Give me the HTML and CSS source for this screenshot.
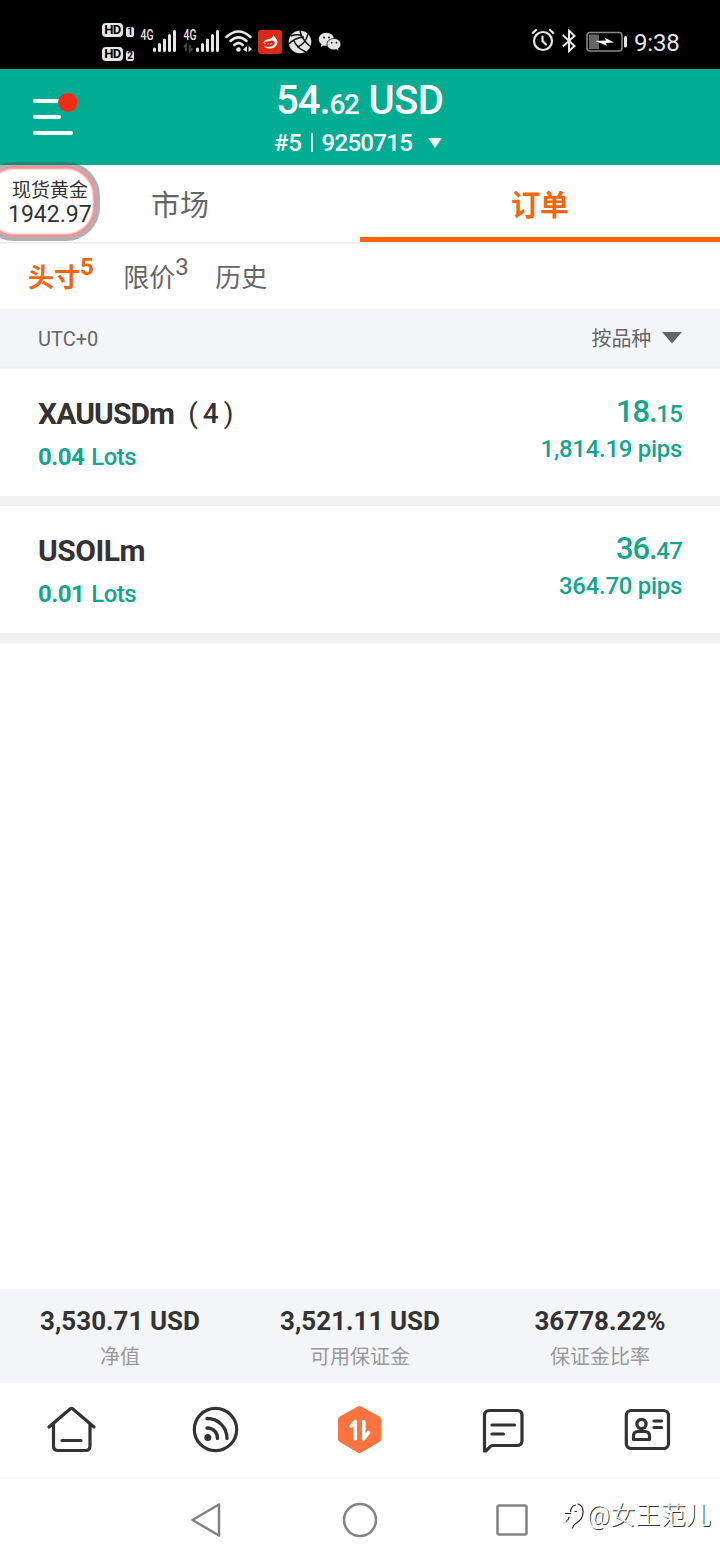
FILE: index.html
```html
<!DOCTYPE html>
<html lang="zh-CN">
<head>
<meta charset="utf-8">
<title>订单</title>
<link rel="stylesheet" href="styles.css">
</head>
<body>
<div class="screen">
  <div class="status">
    <div class="hd-group">
      <div class="hd"><span class="hd-badge">HD</span><span class="hd-num">1</span></div>
      <div class="hd"><span class="hd-badge">HD</span><span class="hd-num">2</span></div>
    </div>
    <svg class="signals" width="80" height="30" viewBox="0 0 80 30">
      <g stroke="#e6e6e6" stroke-width="3" stroke-linecap="round">
        <path d="M14.500 23.500v-1.500M19.500 23.500v-6M24.500 23.500v-10.500M29.500 23.500v-15M34.500 23.500v-19"/>
        <path d="M57.500 23.500v-1.500M62.500 23.500v-6M67.500 23.500v-10.500M72.500 23.500v-15M77.500 23.500v-19"/>
      </g>
      <path d="M44 20l2-2v6M50 18v6l2.500-2.500" fill="none" stroke="#4a4a4a" stroke-width="1.800"/>
      <text class="net" x="0.500" y="13" textLength="13" lengthAdjust="spacingAndGlyphs">4G</text>
      <text class="net" x="43.500" y="13" textLength="13" lengthAdjust="spacingAndGlyphs">4G</text>
    </svg>
    <svg class="wifi" width="28" height="26" viewBox="0 0 28 26">
      <g fill="none" stroke="#e6e6e6" stroke-width="2.500" stroke-linecap="round">
        <path d="M1.500 8Q13.500-3 25.500 8M5.500 12Q13.500 4.800 21.500 12M9.300 16Q13.500 12.300 17.700 16"/>
      </g>
      <circle cx="13.500" cy="20.500" r="2.300" fill="#e6e6e6"/>
      <path d="M18 20.500l4-3.500v6zM23.500 17v6l3.500-3z" fill="#e6e6e6"/>
    </svg>
    <svg class="app-red" width="24" height="24" viewBox="0 0 24 24">
      <rect width="24" height="24" rx="3" fill="#d92a17"/>
      <path d="M9 9.500Q15.500 8.500 15 5Q19.500 9 19.500 12.500Q18.500 18 12.500 18.500Q8 19 6 16Q10 17.800 14 16.300Q17.500 14.500 16.500 11.500Q14 10 11.500 11Q8 10.500 4.500 13.500Q6 10.500 9 9.500z" fill="#fff"/>
      <path d="M6 14l2-.8M9 14.500l2-1M12 14.500l2-1" stroke="#f3a59b" stroke-width="1"/>
    </svg>
    <svg class="ball" width="24" height="24" viewBox="0 0 24 24">
      <circle cx="12" cy="12" r="11.300" fill="#e6e6e6"/>
      <path d="M12 1Q14 10 23 17M16 7Q6 8 1 14M6 11Q9 18 18 22M9 17Q17 15 20 4M3 6Q9 3.500 14 6" fill="none" stroke="#111" stroke-width="1.400"/>
    </svg>
    <svg class="wechat" width="24" height="20" viewBox="0 0 24 20">
      <path d="M8.500.8C4 .8.800 3.700.800 7.200c0 2 1 3.700 2.700 4.900L2.800 15l3-1.500c.9.200 1.800.3 2.700.3C13 13.800 16 10.800 16 7.300S13 .800 8.500.800z" fill="#e6e6e6"/>
      <path d="M16 6.500c-4 0-7 2.500-7 5.700s3 5.700 7 5.700c.8 0 1.600-.1 2.300-.3L21 19l-.6-2.500c1.500-1 2.500-2.500 2.500-4.300 0-3.200-3-5.700-6.900-5.700z" fill="#e6e6e6" stroke="#111" stroke-width=".8"/>
      <g fill="#111"><circle cx="6" cy="5.500" r="1"/><circle cx="11" cy="5.500" r="1"/><circle cx="13.700" cy="10.700" r=".9"/><circle cx="18.500" cy="10.700" r=".9"/></g>
    </svg>
    <svg class="alarm" width="24" height="24" viewBox="0 0 24 24">
      <g fill="none" stroke="#e6e6e6" stroke-width="2.200" stroke-linecap="round">
        <circle cx="12" cy="13" r="9"/><path d="M1.800 4.800L5 2M19 2l3.200 2.800M11.500 8.500v4.500l3.500 3.500"/>
      </g>
    </svg>
    <svg class="bt" width="16" height="24" viewBox="0 0 16 24">
      <path d="M1.800 6L13.500 17 8 22v-20.500L13.500 7 1.800 17.500" fill="none" stroke="#e6e6e6" stroke-width="2"/>
    </svg>
    <svg class="battery" width="42" height="22" viewBox="0 0 42 22">
      <rect x="1" y="1.500" width="35" height="18.500" rx="3" fill="none" stroke="#888" stroke-width="1.600"/>
      <rect x="3" y="3.500" width="10" height="14.500" fill="#666"/>
      <path d="M9.500 10L20 9.500 18.500 6.500 28 11.500 19.500 12 21.500 15z" fill="#fff"/>
      <rect x="38" y="5" width="3" height="11.500" rx="1.500" fill="#e6e6e6"/>
    </svg>
    <span class="clock">9:38</span>
  </div>

  <header class="header">
    <svg class="menu" width="46" height="46" viewBox="0 0 46 46">
      <path d="M3 8h26M3 24h24M3 40h36" stroke="#fff" stroke-width="4" stroke-linecap="round"/>
      <circle cx="35.700" cy="9.500" r="9.600" fill="#f02c18"/>
    </svg>
    <div class="account">
      <div class="balance"><span class="bal-int">54.</span><span class="bal-dec">62</span><span class="bal-cur">USD</span></div>
      <div class="acct-row"><span class="acct-no">#5</span><span class="bar"></span><span class="acct-id">9250715</span>
        <svg width="16" height="12" viewBox="0 0 16 12"><path d="M1 1h14l-7 10z" fill="#fff"/></svg></div>
    </div>
  </header>

  <nav class="tabs">
    <div class="tab">市场</div>
    <div class="tab tab-on">订单</div>
    <div class="float"><div class="float-name">现货黄金</div><div class="float-price">1942.97</div></div>
  </nav>

  <nav class="subtabs">
    <div class="sub sub-on">头寸<span class="count">5</span></div>
    <div class="sub">限价<span class="count">3</span></div>
    <div class="sub">历史</div>
  </nav>

  <div class="filter">
    <span class="utc">UTC+0</span>
    <span class="sort"><span class="sort-text">按品种</span><svg width="20" height="12" viewBox="0 0 20 12"><path d="M0 0h20L10 11.500z" fill="#666"/></svg></span>
  </div>

  <main class="list">
    <section class="item">
      <div class="left">
        <div class="symbol"><span class="sym-x">XAUUSDm</span><span class="paren"><span>(</span><span class="paren-num">4</span><span>)</span></span></div>
        <div class="lots"><b>0.04</b><span>Lots</span></div>
      </div>
      <div class="right">
        <div class="profit"><span class="big">18.</span><span class="small">15</span></div>
        <div class="pips">1,814.19 pips</div>
      </div>
    </section>
    <section class="item">
      <div class="left">
        <div class="symbol"><span class="sym-o">USOILm</span></div>
        <div class="lots"><b>0.01</b><span>Lots</span></div>
      </div>
      <div class="right">
        <div class="profit"><span class="big">36.</span><span class="small">47</span></div>
        <div class="pips">364.70 pips</div>
      </div>
    </section>
  </main>

  <div class="summary">
    <div class="cell"><div class="val">3,530.71 USD</div><div class="lab">净值</div></div>
    <div class="cell"><div class="val">3,521.11 USD</div><div class="lab">可用保证金</div></div>
    <div class="cell"><div class="val">36778.22%</div><div class="lab">保证金比率</div></div>
  </div>

  <nav class="bottom">
    <svg width="56" height="56" viewBox="0 0 56 56">
      <g fill="none" stroke="#333" stroke-width="3.200" stroke-linecap="round" stroke-linejoin="round">
        <path d="M5 26L26.700 7.500Q27.500 7 28.300 7.500L50 26M9.500 23v22q0 4.500 4.500 4.500h27.500q4.500 0 4.500-4.500V23M18 39.500h19"/>
      </g>
    </svg>
    <svg width="56" height="56" viewBox="0 0 56 56">
      <circle cx="27.500" cy="28.500" r="21.200" fill="none" stroke="#333" stroke-width="3.200"/>
      <path d="M19 17.500c11.500 0 20 9 20 20M19 27c6.500 0 10.500 4.500 10.500 10.500" fill="none" stroke="#333" stroke-width="3.400" stroke-linecap="round"/>
      <circle cx="19.800" cy="36.500" r="3.500" fill="#333"/>
    </svg>
    <svg width="56" height="56" viewBox="0 0 56 56">
      <path d="M27.500 8.500L45.500 18.500V38L27.500 48.500L9.500 38V18.500z" fill="#ff7340" stroke="#ff7340" stroke-width="7" stroke-linejoin="round"/>
      <path d="M19 25L23.200 20.500V38M31.800 20.500V38L36.500 31.500" fill="none" stroke="#fff" stroke-width="3.600" stroke-linecap="round" stroke-linejoin="round"/>
    </svg>
    <svg width="56" height="56" viewBox="0 0 56 56">
      <path d="M8.500 50V14.500q0-5 5-5h27.500q5 0 5 5v25q0 5-5 5H17Q15 44.500 13.500 46.300L9.700 50z" fill="none" stroke="#333" stroke-width="3.200" stroke-linejoin="round"/>
      <path d="M16 24h22.500M16 33h11.500" stroke="#333" stroke-width="3.200" stroke-linecap="round"/>
    </svg>
    <svg width="56" height="56" viewBox="0 0 56 56">
      <g fill="none" stroke="#333" stroke-width="3.200">
        <rect x="6.300" y="9.500" width="42.200" height="38" rx="5"/>
        <circle cx="21.500" cy="23" r="4.600"/>
        <path d="M13.500 38.500v-3.500q0-4.500 4.500-4.500h7q4.500 0 4.500 4.500v3.500z" stroke-linejoin="round"/>
        <path d="M34 20h7.500M34 26.500h7.500" stroke-linecap="round"/>
      </g>
    </svg>
  </nav>

  <div class="sysnav">
    <svg class="back" width="34" height="38" viewBox="0 0 34 38"><path d="M30 3.500v31L3.500 19z" fill="none" stroke="#828282" stroke-width="2.500" stroke-linejoin="round"/></svg>
    <svg class="home" width="38" height="38" viewBox="0 0 38 38"><circle cx="19" cy="19" r="16" fill="none" stroke="#828282" stroke-width="2.500"/></svg>
    <svg class="recent" width="34" height="34" viewBox="0 0 34 34"><rect x="2.500" y="2.500" width="29" height="29" rx="1.500" fill="none" stroke="#828282" stroke-width="2.500"/></svg>
    <div class="mark">
      <svg width="26" height="32" viewBox="0 0 26 32">
        <g fill="none" stroke="#222" stroke-width="1.200" stroke-linecap="round">
          <path d="M5.500 23.500Q7.500 22 8 19M4.500 15.500h5M9.500 13.500q1-6 5-6.500M17 6q5.500 1.500 5 9-.5 6.500-6 9.500-3 1.500-4.500 5.500M14 13.500h1.500"/>
        </g>
        <path d="M2 25q4 .5 5-3" fill="none" stroke="#bbb" stroke-width=".8"/>
      </svg><span>@女王范儿</span>
    </div>
  </div>
</div>
</body>
</html>
```
FILE: styles.css
```css
* { box-sizing: border-box; }
body { margin: 0; background: #fff; font-family: Roboto, "Noto Sans CJK SC", sans-serif; color: #333; }
.screen { width: 720px; height: 1560px; display: flex; flex-direction: column; overflow: hidden; }
svg { display: block; flex: none; }
span, div { white-space: nowrap; }

.status { height: 69px; background: #000; display: flex; align-items: flex-start; padding-left: 102px; flex: none; color: #e6e6e6; }
.hd-group { display: flex; flex-direction: column; gap: 10px; padding-top: 23px; width: 38px; }
.hd { display: flex; align-items: flex-end; gap: 3px; height: 14px; }
.hd-badge { width: 21px; height: 14px; border-radius: 4px; background: #e6e6e6; color: #000; font: 700 13px/14px Roboto, sans-serif; letter-spacing: -.5px; text-align: center; }
.hd-num { width: 8px; height: 10px; border-radius: 2px; background: #e6e6e6; color: #000; font: 700 10px/10px Roboto, sans-serif; text-align: center; }
.signals { margin-top: 27px; }
.net { font: 500 14px Roboto, sans-serif; fill: #e6e6e6; }
.wifi { margin: 29px 0 0 5px; }
.app-red { margin: 30px 0 0 5px; }
.ball { margin: 30px 0 0 6px; }
.wechat { margin: 32px 0 0 6px; }
.alarm { margin: 28px 0 0 189px; }
.bt { margin: 29px 0 0 6px; }
.battery { margin: 31px 0 0 9px; }
.clock { margin: 28px 0 0 6px; font-size: 24px; line-height: 30px; letter-spacing: -.2px; }

.header { height: 96px; background: #00ad93; color: #fff; display: flex; flex: none; }
.menu { margin: 24px 0 0 32px; }
.account { width: 200px; margin-left: 196px; }
.balance { display: flex; align-items: baseline; height: 54px; line-height: 64px; padding-left: 2px; font-weight: 500; }
.bal-int { font-size: 40px; letter-spacing: -1px; }
.bal-dec { font-size: 28px; letter-spacing: -1.500px; }
.bal-cur { font-size: 40px; margin-left: 10px; letter-spacing: -.5px; }
.acct-row { display: flex; align-items: center; font-size: 24px; line-height: 40px; font-weight: 500; }
.acct-no { letter-spacing: -.3px; }
.bar { width: 2px; height: 19px; background: #e3fffa; margin: 0 9px 2px; }
.acct-id { letter-spacing: -.7px; }
.acct-row svg { margin-left: 15px; }

.tabs { height: 77px; display: flex; position: relative; flex: none; }
.tab { width: 360px; height: 77px; text-align: center; font-size: 29px; line-height: 83px; color: #666; }
.tab-on { color: #f5660c; font-weight: 700; border-bottom: 5px solid #f5660c; }
.float { position: absolute; left: -20px; top: -3px; width: 120px; height: 79px; border: 4px solid rgba(80,80,80,.45); border-radius: 34px; background: #fff; background-clip: padding-box; box-shadow: inset 0 0 2px 3px #ed9094; padding: 14px 0 0 24px; color: #333; }
.float-name { font-size: 19px; line-height: 22px; padding-left: 4px; }
.float-price { font-size: 23px; line-height: 26px; }

.subtabs { height: 67px; border-top: 2px solid #f1f1f1; display: flex; padding-left: 28px; flex: none; font-size: 26px; line-height: 68px; color: #666; }
.sub { display: flex; margin-right: 27px; }
.sub:first-child { margin-right: 30px; }
.sub-on { color: #f5660c; font-weight: 700; }
.count { font-size: 24px; line-height: 47px; letter-spacing: -.5px; }

.filter { height: 60px; background: #f4f5f7; border-bottom: 3px solid #f1f1f1; display: flex; justify-content: space-between; padding: 0 38px; flex: none; color: #666; font-size: 20px; line-height: 60px; }
.sort { display: flex; align-items: center; gap: 11px; }
.sort-text { line-height: 57px; padding-top: 4px; letter-spacing: -.2px; }

.list { flex: 1; }
.item { height: 137px; border-bottom: 10px solid #f1f1f1; display: flex; justify-content: space-between; padding: 26px 38px 0; }
.symbol { display: flex; font-size: 30px; line-height: 38px; font-weight: 700; }
.sym-x { letter-spacing: -.9px; }
.sym-o { letter-spacing: -.5px; }
.paren { display: flex; font-size: 28px; font-weight: 400; margin-left: 14px; gap: 5px; }
.paren-num { font-weight: 500; }
.lots { display: flex; margin-top: 6px; font-size: 24px; line-height: 36px; color: #12a68f; gap: 7px; letter-spacing: -.5px; }
.lots span { font-weight: 500; }
.right { text-align: right; color: #12a68f; font-weight: 500; }
.profit { height: 36px; line-height: 34px; }
.big { font-size: 31px; letter-spacing: -1.200px; }
.small { font-size: 24px; letter-spacing: -.8px; }
.pips { font-size: 24px; line-height: 36px; letter-spacing: -.3px; }

.summary { height: 94px; background: #f4f5f7; display: flex; flex: none; }
.cell { width: 240px; text-align: center; padding-top: 15px; }
.val { font-size: 26px; line-height: 34px; font-weight: 700; }
.lab { font-size: 20px; line-height: 38px; color: #999; }

.bottom { height: 96px; border-bottom: 2px solid #f7f7f7; display: flex; justify-content: space-around; padding-top: 18px; flex: none; }

.sysnav { height: 81px; display: flex; flex: none; }
.back { margin: 22px 0 0 189px; }
.home { margin: 22px 0 0 118px; }
.recent { margin: 24px 0 0 116px; }
.mark { display: flex; margin: 19px 0 0 32px; }
.mark span { font-size: 25px; line-height: 35px; color: #fff; font-weight: 300; text-shadow: 1px 1px 0 #333; letter-spacing: .3px; }
```
